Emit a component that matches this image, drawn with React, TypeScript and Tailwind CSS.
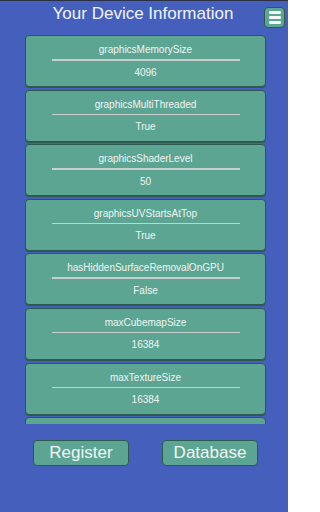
import React from "react";

const items = [
  { name: "graphicsMemorySize", value: "4096" },
  { name: "graphicsMultiThreaded", value: "True" },
  { name: "graphicsShaderLevel", value: "50" },
  { name: "graphicsUVStartsAtTop", value: "True" },
  { name: "hasHiddenSurfaceRemovalOnGPU", value: "False" },
  { name: "maxCubemapSize", value: "16384" },
  { name: "maxTextureSize", value: "16384" },
  { name: "maxTextureArraySlices", value: "2048" },
];

function InfoCard({ name, value }: { name: string; value: string }) {
  return (
    <div className="h-[52px] shrink-0 rounded-[4px] border border-[#2c5a4e] bg-[#5ba592] shadow-[0_1px_0_#2c5a4e] flex flex-col items-center">
      <div className="mt-[7px] text-[10px] leading-[14px] text-[#f0f5f2]">{name}</div>
      <div className="mt-[2px] h-[1.5px] w-[188px] bg-[#c9cfcc]" />
      <div className="mt-[5px] text-[10px] leading-[14px] text-[#f0f5f2]">{value}</div>
    </div>
  );
}

export default function App() {
  return (
    <div
      className="w-[288px] h-[512px] bg-[#4460bc] border-t border-[#2a2f45] flex flex-col overflow-hidden"
      style={{ fontFamily: '"Liberation Sans", Arial, sans-serif' }}
    >
      <div className="relative h-[34px] shrink-0">
        <div className="absolute left-0 right-0 top-[2px] text-center text-[17px] leading-[22px] text-[#f2f4fb] pr-[2px]">
          Your Device Information
        </div>
        <button className="absolute left-[264px] top-[6px] w-[21px] h-[21px] rounded-[4px] border border-[#2c5a4e] bg-[#5ba592] flex flex-col items-center justify-center gap-[2px]">
          <span className="block w-[12px] h-[3px] rounded-[1px] bg-[#f4f7f6]" />
          <span className="block w-[12px] h-[3px] rounded-[1px] bg-[#f4f7f6]" />
          <span className="block w-[12px] h-[3px] rounded-[1px] bg-[#f4f7f6]" />
        </button>
      </div>

      <div className="ml-[25px] w-[241px] h-[389px] shrink-0 overflow-hidden flex flex-col gap-[2.6px]">
        {items.map((it) => (
          <InfoCard key={it.name} name={it.name} value={it.value} />
        ))}
      </div>

      <div className="mt-[16px] flex justify-between pl-[33px] pr-[30px]">
        <button className="w-[96px] h-[26px] rounded-[4px] border border-[#2c5a4e] bg-[#5ba592] text-[17px] leading-[24px] text-[#f2f6f4]">
          Register
        </button>
        <button className="w-[96px] h-[26px] rounded-[4px] border border-[#2c5a4e] bg-[#5ba592] text-[17px] leading-[24px] text-[#f2f6f4]">
          Database
        </button>
      </div>
    </div>
  );
}
